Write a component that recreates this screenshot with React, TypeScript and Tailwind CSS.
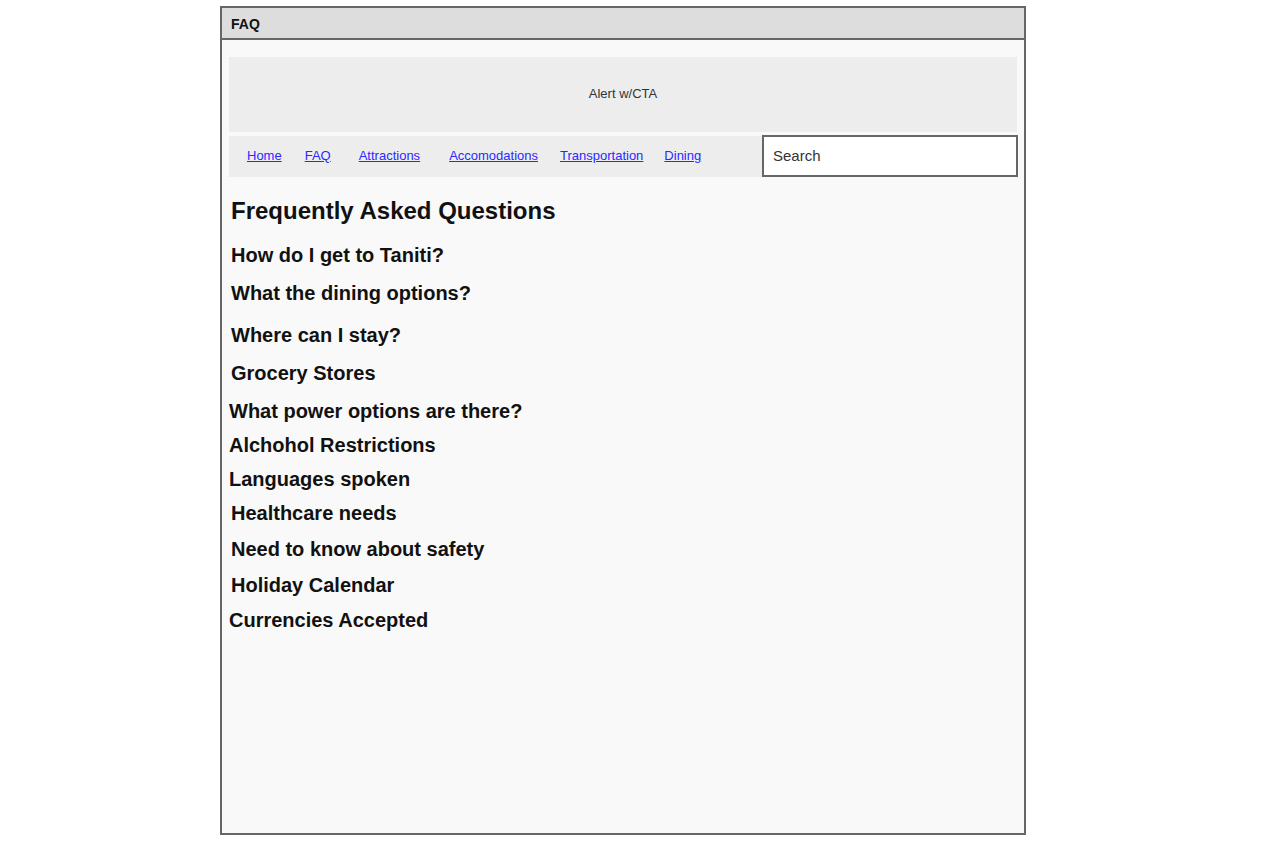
const links = [
  { label: "Home", ml: "ml-[18px]" },
  { label: "FAQ", ml: "ml-[23px]" },
  { label: "Attractions", ml: "ml-[28px]" },
  { label: "Accomodations", ml: "ml-[29px]" },
  { label: "Transportation", ml: "ml-[22px]" },
  { label: "Dining", ml: "ml-[21px]" },
];

// top offsets are relative to the previous row, taken from the wireframe
const questions = [
  { text: "How do I get to Taniti?", cls: "mt-[18px] ml-[2px]" },
  { text: "What the dining options?", cls: "mt-[14px] ml-[2px]" },
  { text: "Where can I stay?", cls: "mt-[18px] ml-[2px]" },
  { text: "Grocery Stores", cls: "mt-[14px] ml-[2px]" },
  { text: "What power options are there?", cls: "mt-[14px]" },
  { text: "Alchohol Restrictions", cls: "mt-[10px]" },
  { text: "Languages spoken", cls: "mt-[10px]" },
  { text: "Healthcare needs", cls: "mt-[10px] ml-[2px]" },
  { text: "Need to know about safety", cls: "mt-[12px] ml-[2px]" },
  { text: "Holiday Calendar", cls: "mt-[12px] ml-[2px]" },
  { text: "Currencies Accepted", cls: "mt-[11px]" },
];

export default function App() {
  return (
    <div className="min-h-[857px] bg-white pt-[6px] font-['Liberation_Sans',Arial,sans-serif]">
      <div className="ml-[220px] flex h-[829px] w-[806px] flex-col border-2 border-[#666666] bg-[#f9f9f9]">
        <div className="flex h-[32px] shrink-0 items-center border-b-2 border-[#666666] bg-[#dddddd] pt-[3px] pl-[9px] text-[14px] font-bold text-[#111]">
          FAQ
        </div>

        <div className="px-[7px] pt-[17px]">
          <div className="flex h-[75px] w-[788px] items-center justify-center bg-[#ededed] pb-[1px] text-[13px] text-[#333]">
            Alert w/CTA
          </div>

          <div className="mt-[3px] flex h-[42px] w-[789px]">
            <nav className="mt-[1px] flex w-[533px] items-center bg-[#ededed] pb-[2px] text-[13px]">
              {links.map((l) => (
                <a key={l.label} href="#" className={`${l.ml} text-[#2a2aff] underline`}>
                  {l.label}
                </a>
              ))}
            </nav>
            <div className="flex w-[256px] items-center border-2 border-[#666666] bg-white pt-[1px] pl-[9px] text-[15px] text-[#333]">
              Search
            </div>
          </div>

          <h1 className="mt-[20px] ml-[2px] text-[24px] leading-[28px] font-bold text-[#111]">
            Frequently Asked Questions
          </h1>

          {questions.map((q) => (
            <h2 key={q.text} className={`${q.cls} text-[20px] leading-[24px] font-bold text-[#111]`}>
              {q.text}
            </h2>
          ))}
        </div>
      </div>
    </div>
  );
}
